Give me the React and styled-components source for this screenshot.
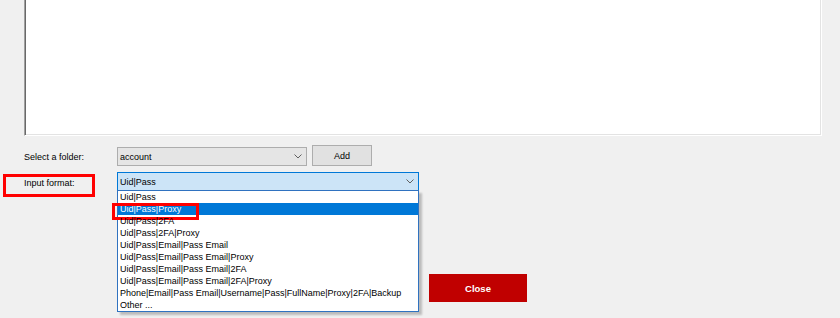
import styled, {createGlobalStyle} from "styled-components";

const GlobalStyle = createGlobalStyle`
    html, body {
        margin: 0;
        padding: 0;
        background: #f0f0f0;
    }
    body {
        font-family: "Liberation Sans", Arial, sans-serif;
        font-size: 9px;
        color: #000;
    }
`;

const Page = styled.div`
    position: relative;
    width: 840px;
    height: 318px;
    overflow: hidden;
    background: #f0f0f0;
`;

const TextBox = styled.div`
    margin-left: 24px;
    width: 796px;
    height: 135px;
    background: #fff;
    border-left: 1px solid #a0a0a0;
    border-right: 1px solid #fff;
    border-bottom: 1px solid #fff;
    box-shadow: inset 1px 0 0 #696969, inset -1px 0 0 #e3e3e3, inset 0 -1px 0 #e3e3e3;
    margin-bottom: 9px;
`;

const Form = styled.div`
    display: grid;
    grid-template-columns: 93px auto;
    row-gap: 6px;
    padding-left: 24px;
`;

const Label = styled.div`
    position: relative;
    display: flex;
    align-items: center;
    padding-top: 2px;
`;

const Annotation = styled.div`
    position: absolute;
    border: 3px solid #f00;
    box-sizing: border-box;
    pointer-events: none;
`;

const Row = styled.div`
    display: flex;
    align-items: flex-end;
    gap: 5px;
`;

const Combo = styled.div`
    position: relative;
    box-sizing: border-box;
    width: ${p => p.$width}px;
    height: 19px;
    display: flex;
    align-items: center;
    justify-content: space-between;
    padding: 0 4px 0 2px;
    background: ${p => (p.$active ? "#cce4f7" : "#e5e5e5")};
    border: 1px solid ${p => (p.$active ? "#0078d7" : "#adadad")};
`;

const Chevron = () => (
    <svg width="8" height="5" viewBox="0 0 8 5">
        <polyline points="0.5,0.5 4,4 7.5,0.5" fill="none" stroke="#606060" strokeWidth="1" />
    </svg>
);

const Button = styled.button`
    box-sizing: border-box;
    width: 60px;
    height: 21px;
    background: #e1e1e1;
    border: 1px solid #adadad;
    font-family: inherit;
    font-size: 9px;
    color: #000;
    padding: 0;
`;

const DropList = styled.div`
    position: absolute;
    top: 100%;
    left: -1px;
    width: 302px;
    box-sizing: border-box;
    background: #fff;
    border: 1px solid #2f72c0;
    box-shadow: 3px 3px 2px rgba(0, 0, 0, 0.22);
    z-index: 2;
`;

const Item = styled.div`
    position: relative;
    height: 12px;
    line-height: 12px;
    padding-left: 2px;
    white-space: nowrap;
    background: ${p => (p.$selected ? "#0078d7" : "transparent")};
    color: ${p => (p.$selected ? "#fff" : "#000")};
`;

const Footer = styled.div`
    display: flex;
    padding-left: 429px;
    margin-top: 83px;
`;

const CloseButton = styled.button`
    width: 98px;
    height: 28px;
    background: #c00000;
    color: #fff;
    border: none;
    font-family: inherit;
    font-size: 9.5px;
    font-weight: bold;
    padding: 0;
`;

const formats = [
    "Uid|Pass",
    "Uid|Pass|Proxy",
    "Uid|Pass|2FA",
    "Uid|Pass|2FA|Proxy",
    "Uid|Pass|Email|Pass Email",
    "Uid|Pass|Email|Pass Email|Proxy",
    "Uid|Pass|Email|Pass Email|2FA",
    "Uid|Pass|Email|Pass Email|2FA|Proxy",
    "Phone|Email|Pass Email|Username|Pass|FullName|Proxy|2FA|Backup",
    "Other ...",
];

export default function App() {
    return (
        <Page>
            <GlobalStyle />
            <TextBox />
            <Form>
                <Label>Select a folder:</Label>
                <Row>
                    <Combo $width={190}>
                        <span>account</span>
                        <Chevron />
                    </Combo>
                    <Button>Add</Button>
                </Row>
                <Label>
                    Input format:
                    <Annotation style={{left: -21, top: 2, width: 92, height: 23}} />
                </Label>
                <Row>
                    <Combo $width={302} $active>
                        <span>Uid|Pass</span>
                        <Chevron />
                        <DropList>
                            {formats.map((f, i) => (
                                <Item key={f} $selected={i === 1}>
                                    {f}
                                    {i === 1 && <Annotation style={{left: -6, top: 0, width: 87, height: 17}} />}
                                </Item>
                            ))}
                        </DropList>
                    </Combo>
                </Row>
            </Form>
            <Footer>
                <CloseButton>Close</CloseButton>
            </Footer>
        </Page>
    );
}
